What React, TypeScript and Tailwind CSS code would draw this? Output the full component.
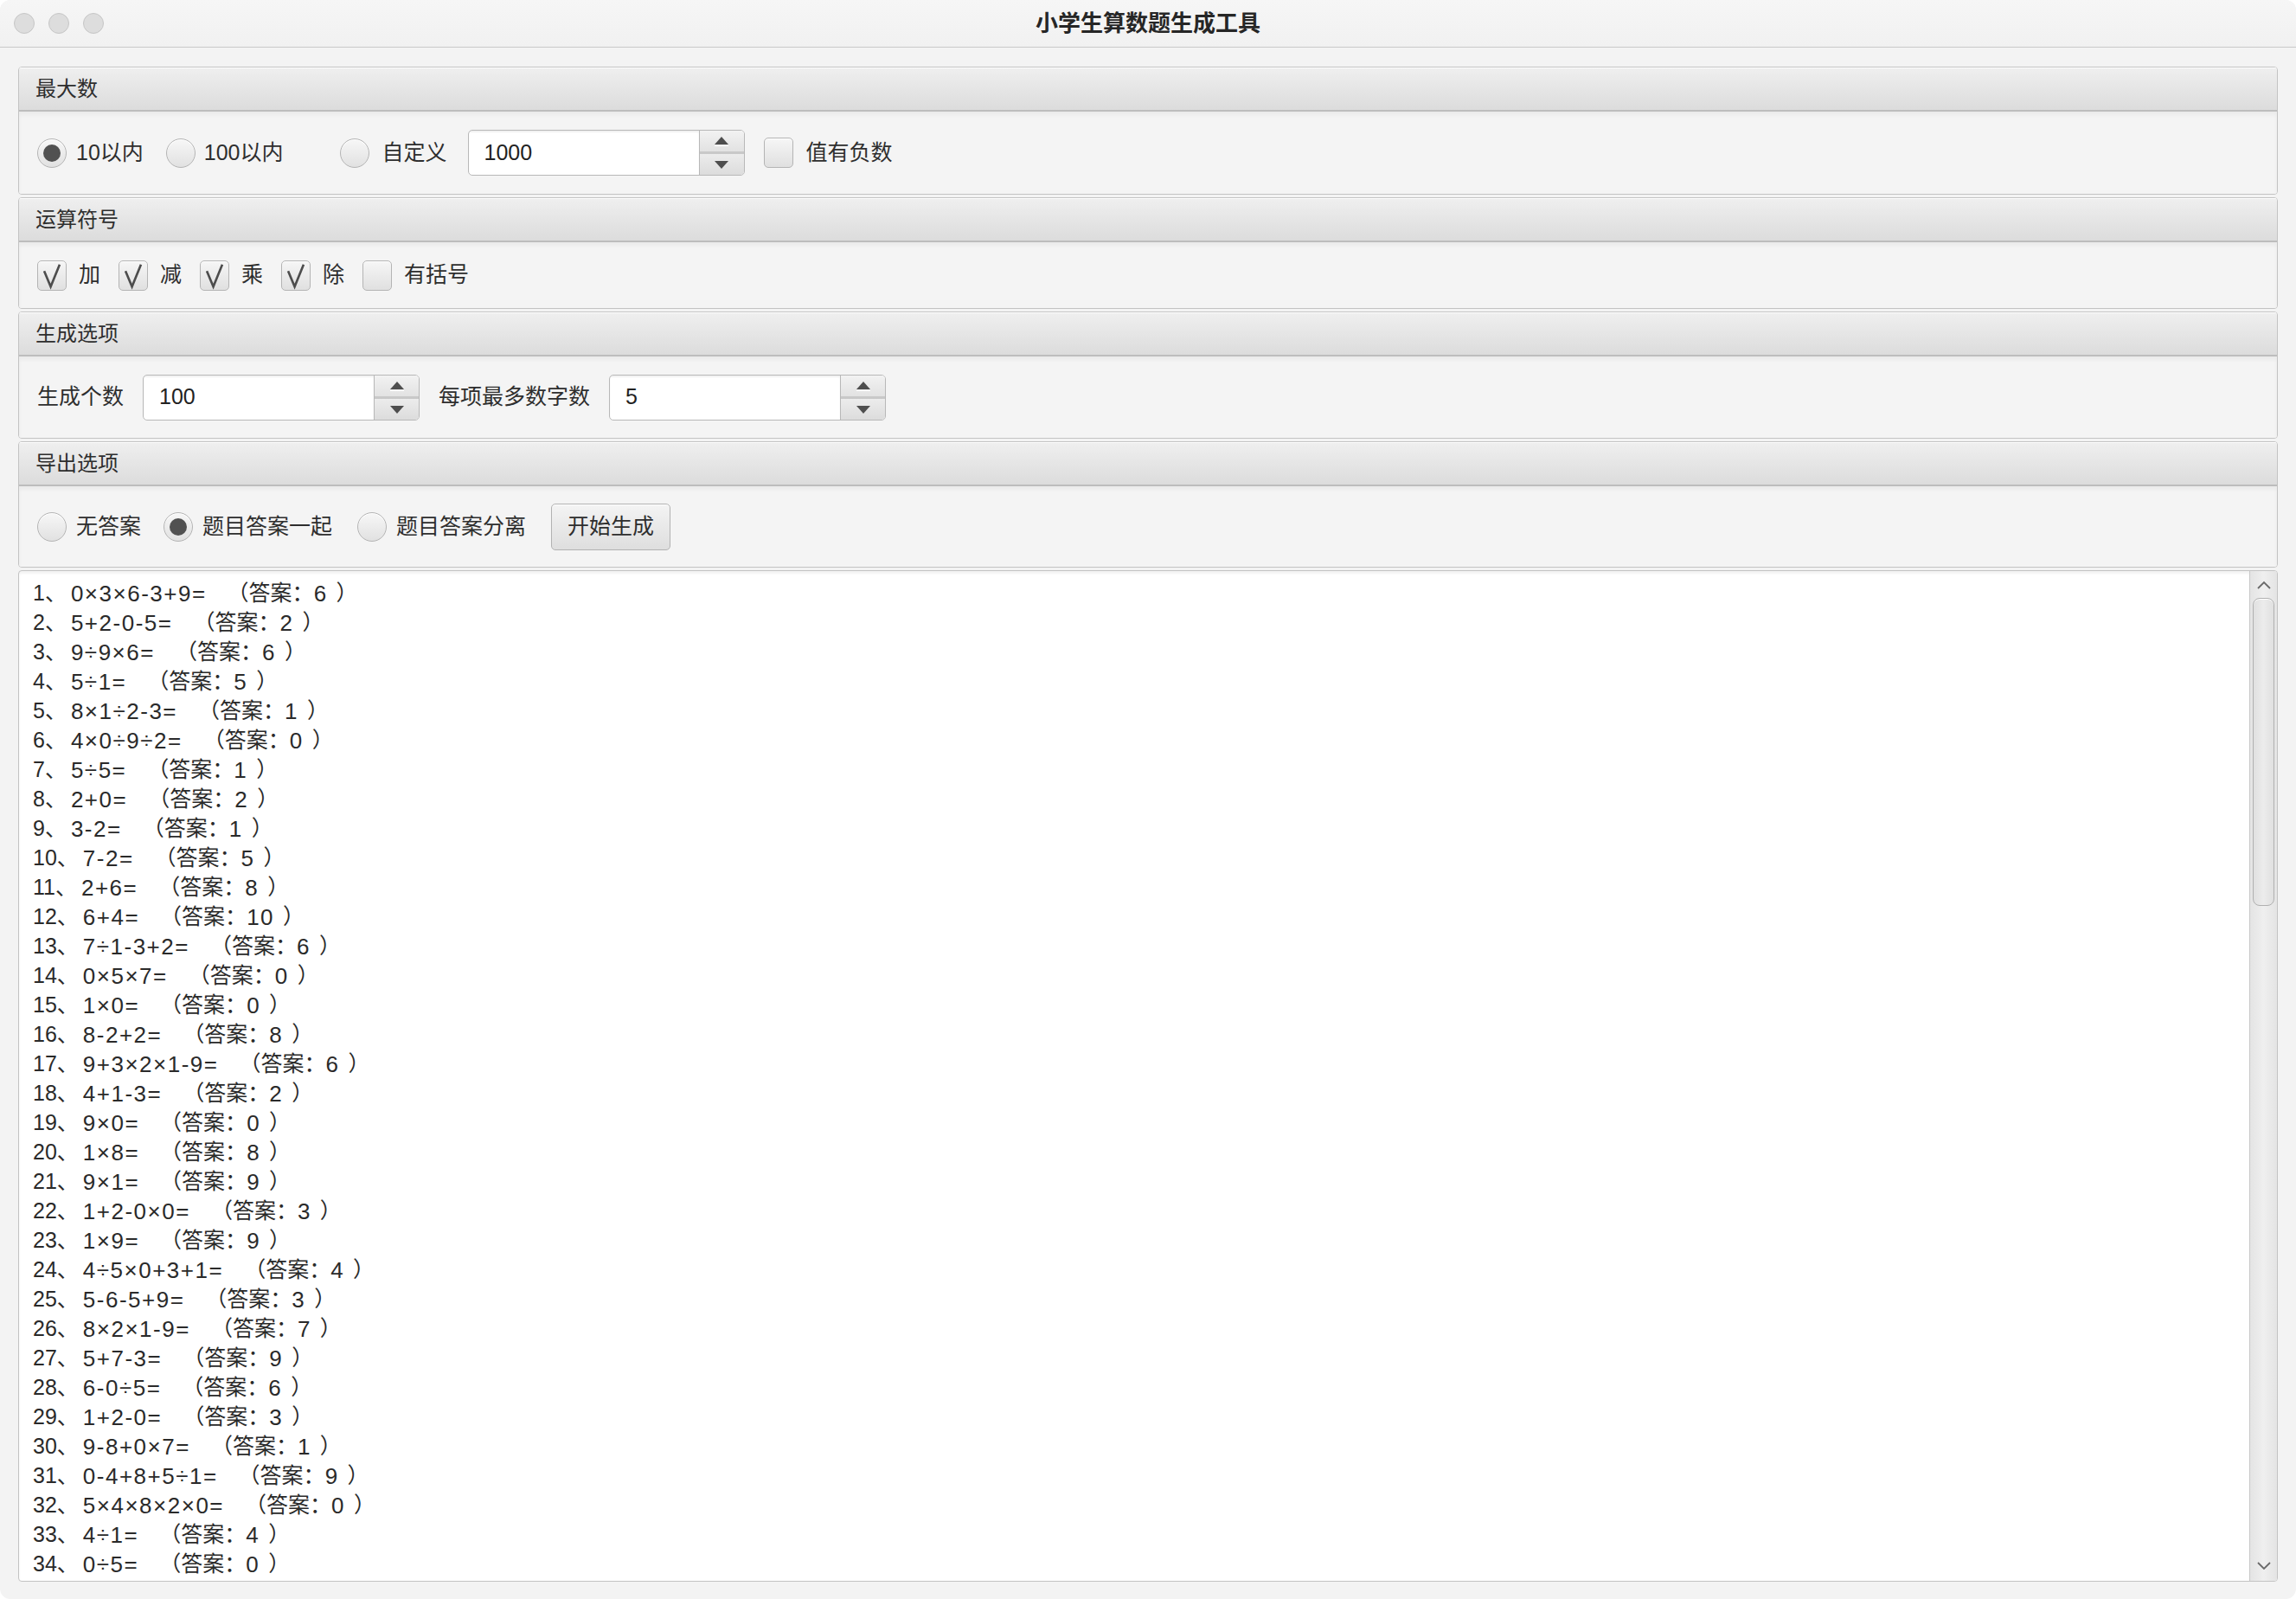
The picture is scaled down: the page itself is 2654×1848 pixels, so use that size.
import React from "react";

const problems: [string, string][] = [
  ["0×3×6-3+9", "6"],
  ["5+2-0-5", "2"],
  ["9÷9×6", "6"],
  ["5÷1", "5"],
  ["8×1÷2-3", "1"],
  ["4×0÷9÷2", "0"],
  ["5÷5", "1"],
  ["2+0", "2"],
  ["3-2", "1"],
  ["7-2", "5"],
  ["2+6", "8"],
  ["6+4", "10"],
  ["7÷1-3+2", "6"],
  ["0×5×7", "0"],
  ["1×0", "0"],
  ["8-2+2", "8"],
  ["9+3×2×1-9", "6"],
  ["4+1-3", "2"],
  ["9×0", "0"],
  ["1×8", "8"],
  ["9×1", "9"],
  ["1+2-0×0", "3"],
  ["1×9", "9"],
  ["4÷5×0+3+1", "4"],
  ["5-6-5+9", "3"],
  ["8×2×1-9", "7"],
  ["5+7-3", "9"],
  ["6-0÷5", "6"],
  ["1+2-0", "3"],
  ["9-8+0×7", "1"],
  ["0-4+8+5÷1", "9"],
  ["5×4×8×2×0", "0"],
  ["4÷1", "4"],
  ["0÷5", "0"],
];

function Radio({ checked = false }: { checked?: boolean }) {
  return (
    <div className="w-[34px] h-[34px] shrink-0 rounded-full border border-[#b4b4b4] bg-gradient-to-b from-[#f7f7f7] to-[#e1e1e1] flex items-center justify-center shadow-[inset_0_1px_0_#ffffff]">
      {checked && <div className="w-[20px] h-[20px] rounded-full bg-[#515151]" />}
    </div>
  );
}

function Checkbox({ checked = false }: { checked?: boolean }) {
  return (
    <div className="w-[34px] h-[35px] shrink-0 rounded-[5px] border border-[#b4b4b4] bg-gradient-to-b from-[#f6f6f6] to-[#e0e0e0] flex items-center justify-center shadow-[inset_0_1px_0_#ffffff]">
      {checked && (
        <svg width="34" height="35" viewBox="0 0 34 35">
          <path d="M7.5 12 L15.5 31 L26.5 4" fill="none" stroke="#4d4d4d" strokeWidth="2.8" strokeLinejoin="miter" />
        </svg>
      )}
    </div>
  );
}

function Spinner({ value, width }: { value: string; width: string }) {
  return (
    <div className={`${width} h-[53px] shrink-0 flex border border-[#b8b8b8] rounded-[5px] overflow-hidden bg-white`}>
      <div className="flex-1 flex items-center pl-[18px] text-[25px] text-[#222] shadow-[inset_0_2px_2px_rgba(0,0,0,0.06)]">{value}</div>
      <div className="w-[52px] flex flex-col border-l border-[#b8b8b8]">
        <div className="flex-1 flex items-center justify-center bg-gradient-to-b from-[#f2f2f2] to-[#e2e2e2] border-b-[3px] border-[#c8c8c8]">
          <svg width="18" height="12" viewBox="0 0 18 12">
            <polygon points="9,1 17,10 1,10" fill="#4e4e4e" />
            <line x1="1" y1="11.5" x2="17" y2="11.5" stroke="#ffffff" strokeWidth="1" />
          </svg>
        </div>
        <div className="flex-1 flex items-center justify-center bg-gradient-to-b from-[#ececec] to-[#dcdcdc]">
          <svg width="18" height="12" viewBox="0 0 18 12">
            <polygon points="1,2 17,2 9,11" fill="#4e4e4e" />
          </svg>
        </div>
      </div>
    </div>
  );
}

function Panel({ title, height, children }: { title: string; height: string; children: React.ReactNode }) {
  return (
    <div className="border border-[#c3c3c3] rounded-[4px] overflow-hidden shrink-0">
      <div className="h-[51px] flex items-center px-[19px] bg-gradient-to-b from-[#efefef] to-[#dcdcdc] border-b-[2px] border-[#bdbdbd] shadow-[inset_0_1px_0_#ffffff] text-[24px] text-[#2e2e2e]">
        {title}
      </div>
      <div className={`${height} flex items-center px-[21px] bg-[#f4f4f4] shadow-[inset_0_4px_4px_rgba(0,0,0,0.04)]`}>{children}</div>
    </div>
  );
}

function Label({ children, className = "" }: { children: React.ReactNode; className?: string }) {
  return <span className={`text-[25px] text-[#2e2e2e] whitespace-nowrap ${className}`}>{children}</span>;
}

export default function App() {
  return (
    <div className="w-[2654px] h-[1848px] bg-white font-['Liberation_Sans','Noto_Sans_CJK_SC',sans-serif]">
      <div className="h-full rounded-[12px] bg-[#f3f3f3] flex flex-col overflow-hidden">
        <div className="h-[55px] shrink-0 relative flex items-center justify-center border-b border-[#c9c9c9] bg-gradient-to-b from-[#f6f6f6] to-[#f1f1f1]">
          <div className="absolute left-[16px] top-[15px] flex gap-[16px]">
            <div className="w-[24px] h-[24px] rounded-full bg-[#dddddd] border border-[#c6c6c6]" />
            <div className="w-[24px] h-[24px] rounded-full bg-[#dddddd] border border-[#c6c6c6]" />
            <div className="w-[24px] h-[24px] rounded-full bg-[#dddddd] border border-[#c6c6c6]" />
          </div>
          <span className="text-[26px] font-semibold text-[#262626]">小学生算数题生成工具</span>
        </div>

        <div className="flex-1 flex flex-col px-[21px] pt-[22px] pb-[20px] gap-[3px] min-h-0">
          <Panel title="最大数" height="h-[95px]">
            <Radio checked />
            <Label className="ml-[11px]">10以内</Label>
            <div className="ml-[26px]"><Radio /></div>
            <Label className="ml-[10px]">100以内</Label>
            <div className="ml-[65px]"><Radio /></div>
            <Label className="ml-[15px]">自定义</Label>
            <div className="ml-[24px]"><Spinner value="1000" width="w-[320px]" /></div>
            <div className="ml-[22px]"><Checkbox /></div>
            <Label className="ml-[15px]">值有负数</Label>
          </Panel>

          <Panel title="运算符号" height="h-[76px]">
            <Checkbox checked />
            <Label className="ml-[14px]">加</Label>
            <div className="ml-[21px]"><Checkbox checked /></div>
            <Label className="ml-[14px]">减</Label>
            <div className="ml-[21px]"><Checkbox checked /></div>
            <Label className="ml-[14px]">乘</Label>
            <div className="ml-[21px]"><Checkbox checked /></div>
            <Label className="ml-[14px]">除</Label>
            <div className="ml-[21px]"><Checkbox /></div>
            <Label className="ml-[14px]">有括号</Label>
          </Panel>

          <Panel title="生成选项" height="h-[94px]">
            <Label>生成个数</Label>
            <div className="ml-[22px]"><Spinner value="100" width="w-[320px]" /></div>
            <Label className="ml-[22px]">每项最多数字数</Label>
            <div className="ml-[22px]"><Spinner value="5" width="w-[320px]" /></div>
          </Panel>

          <Panel title="导出选项" height="h-[93px]">
            <Radio />
            <Label className="ml-[11px]">无答案</Label>
            <div className="ml-[26px]"><Radio checked /></div>
            <Label className="ml-[11px]">题目答案一起</Label>
            <div className="ml-[29px]"><Radio /></div>
            <Label className="ml-[11px]">题目答案分离</Label>
            <button className="ml-[29px] h-[54px] w-[138px] rounded-[5px] border border-[#b2b2b2] bg-gradient-to-b from-[#f4f4f4] to-[#dedede] shadow-[inset_0_1px_0_#ffffff] text-[25px] text-[#2e2e2e]">
              开始生成
            </button>
          </Panel>

          <div className="flex-1 min-h-0 flex border border-[#c3c3c3] rounded-[4px] bg-white overflow-hidden">
            <div className="flex-1 pt-[9px] pl-[16px] shadow-[inset_0_3px_3px_rgba(0,0,0,0.05)] overflow-hidden">
              {problems.map(([expr, ans], i) => (
                <div key={i} className="h-[34px] flex items-center text-[25px] text-[#2a2a2a] whitespace-pre">
                  <span>{i + 1}</span>
                  <span className="inline-block w-[30px]">、</span>
                  <span className="text-[26px] tracking-[1.5px]">{expr}=</span>
                  <span className="ml-[24px]">（答案：</span>
                  <span className="text-[26px] tracking-[1.5px]">{ans}</span>
                  <span className="ml-[10px]">）</span>
                </div>
              ))}
            </div>
            <div className="w-[32px] shrink-0 flex flex-col border-l border-[#c8c8c8] bg-gradient-to-r from-[#e4e4e4] via-[#efefef] to-[#e4e4e4]">
              <div className="h-[31px] flex items-center justify-center">
                <svg width="16" height="10" viewBox="0 0 16 10">
                  <polyline points="1,9 8,2 15,9" fill="none" stroke="#6a6a6a" strokeWidth="1.8" />
                </svg>
              </div>
              <div className="mx-[3px] h-[356px] rounded-[8px] border border-[#b0b0b0] bg-gradient-to-r from-[#e0e0e0] via-[#ececec] to-[#e0e0e0] shadow-[inset_0_1px_0_#ffffff]" />
              <div className="flex-1" />
              <div className="h-[30px] flex items-start justify-center pt-[8px]">
                <svg width="16" height="10" viewBox="0 0 16 10">
                  <polyline points="1,1 8,8 15,1" fill="none" stroke="#6a6a6a" strokeWidth="1.8" />
                </svg>
              </div>
            </div>
          </div>
        </div>
      </div>
    </div>
  );
}
